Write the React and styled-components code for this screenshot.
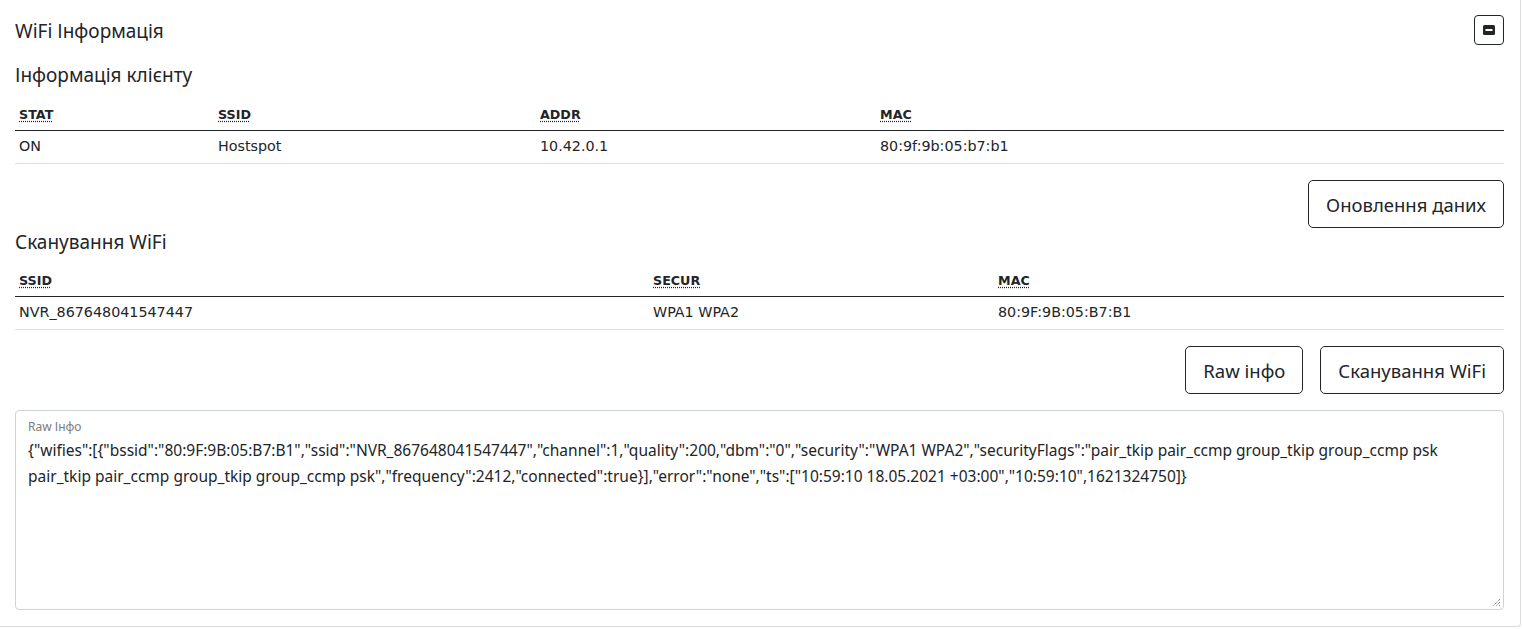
import React from "react";
import styled, { createGlobalStyle } from "styled-components";

const Global = createGlobalStyle`
  html, body { margin: 0; padding: 0; background: #fff; }
  body { font-family: "Noto Sans", "Open Sans", sans-serif; color: #212529; }
  * { box-sizing: border-box; }
`;

const Card = styled.div`
  width: 1521px;
  height: 627px;
  border-right: 1px solid #dcdcdc;
  border-bottom: 1px solid #dcdcdc;
  border-bottom-right-radius: 4px;
  padding: 15px 16px 0 15px;
  display: flex;
  flex-direction: column;
`;

const HeaderRow = styled.div`
  display: flex;
  align-items: center;
  justify-content: space-between;
  height: 30px;
`;

const Title = styled.h2`
  margin: 2px 0 0;
  font-size: 19px;
  font-weight: 400;
  line-height: 26px;
`;

const CollapseBtn = styled.button`
  width: 30px;
  height: 30px;
  border: 1px solid #212529;
  border-radius: 4px;
  background: #fff;
  padding: 0;
  display: flex;
  align-items: center;
  justify-content: center;
`;

const SubTitle = styled.h3`
  margin: ${(p) => p.$mt || 0}px 0 0;
  font-size: 19px;
  font-weight: 400;
  line-height: 26px;
`;

const Table = styled.table`
  width: 100%;
  border-collapse: collapse;
  margin-top: ${(p) => p.$mt || 0}px;
  font-family: "DejaVu Sans", sans-serif;
`;

const Th = styled.th`
  text-align: left;
  padding: 8px 4px 7px;
  line-height: 16px;
  border-bottom: 1px solid #212529;
  font-size: 12.7px;
  font-weight: 700;
  width: ${(p) => p.$w || "auto"};
`;

const Abbr = styled.abbr`
  text-decoration: underline dotted;
  text-underline-offset: 2px;
  cursor: help;
`;

const Td = styled.td`
  padding: 7px 4px 8px;
  line-height: 17px;
  border-bottom: 1px solid #dee2e6;
  font-size: 14.3px;
`;

const Actions = styled.div`
  display: flex;
  justify-content: flex-end;
  gap: 17px;
  margin-top: ${(p) => p.$mt || 0}px;
`;

const Button = styled.button`
  height: 48px;
  padding: 0 17px;
  border: 1px solid #212529;
  border-radius: 5px;
  background: #fff;
  color: #212529;
  font-family: "Noto Sans", "Open Sans", sans-serif;
  font-size: 18.5px;
`;

const RawBox = styled.div`
  margin-top: 16px;
  height: 200px;
  border: 1px solid #ced4da;
  border-radius: 4px;
  padding: 8px 12px;
  position: relative;
`;

const RawLabel = styled.div`
  font-size: 12px;
  color: #7b7b7b;
  line-height: 16px;
`;

const RawText = styled.div`
  margin-top: 2px;
  font-size: 15.5px;
  line-height: 26px;
  word-break: break-word;
`;

const Grip = styled.svg`
  position: absolute;
  right: 2px;
  bottom: 2px;
`;

export default function App() {
  const raw =
    '{"wifies":[{"bssid":"80:9F:9B:05:B7:B1","ssid":"NVR_867648041547447","channel":1,"quality":200,"dbm":"0","security":"WPA1 WPA2","securityFlags":"pair_tkip pair_ccmp group_tkip group_ccmp psk pair_tkip pair_ccmp group_tkip group_ccmp psk","frequency":2412,"connected":true}],"error":"none","ts":["10:59:10 18.05.2021 +03:00","10:59:10",1621324750]}';
  return (
    <>
      <Global />
      <Card>
        <HeaderRow>
          <Title>WiFi Інформація</Title>
          <CollapseBtn aria-label="collapse">
            <svg width="12" height="10" viewBox="0 0 12 10">
              <rect x="0" y="0" width="12" height="10" rx="1.5" fill="#212529" />
              <rect x="2.5" y="4" width="7" height="2" fill="#fff" />
            </svg>
          </CollapseBtn>
        </HeaderRow>
        <SubTitle $mt={17}>Інформація клієнту</SubTitle>
        <Table $mt={11}>
          <thead>
            <tr>
              <Th $w="199px"><Abbr title="Status">STAT</Abbr></Th>
              <Th $w="322px"><Abbr title="SSID">SSID</Abbr></Th>
              <Th $w="340px"><Abbr title="Address">ADDR</Abbr></Th>
              <Th><Abbr title="MAC">MAC</Abbr></Th>
            </tr>
          </thead>
          <tbody>
            <tr>
              <Td>ON</Td>
              <Td>Hostspot</Td>
              <Td>10.42.0.1</Td>
              <Td>80:9f:9b:05:b7:b1</Td>
            </tr>
          </tbody>
        </Table>
        <Actions $mt={16}>
          <Button>Оновлення даних</Button>
        </Actions>
        <SubTitle $mt={1}>Сканування WiFi</SubTitle>
        <Table $mt={10}>
          <thead>
            <tr>
              <Th $w="634px"><Abbr title="SSID">SSID</Abbr></Th>
              <Th $w="345px"><Abbr title="Security">SECUR</Abbr></Th>
              <Th><Abbr title="MAC">MAC</Abbr></Th>
            </tr>
          </thead>
          <tbody>
            <tr>
              <Td>NVR_867648041547447</Td>
              <Td>WPA1 WPA2</Td>
              <Td>80:9F:9B:05:B7:B1</Td>
            </tr>
          </tbody>
        </Table>
        <Actions $mt={16}>
          <Button>Raw інфо</Button>
          <Button>Сканування WiFi</Button>
        </Actions>
        <RawBox>
          <RawLabel>Raw Інфо</RawLabel>
          <RawText>{raw}</RawText>
          <Grip width="10" height="10" viewBox="0 0 10 10">
            <path d="M9 2 L2 9 M9 5 L5 9 M9 8 L8 9" stroke="#555" strokeWidth="1" strokeDasharray="1 1" />
          </Grip>
        </RawBox>
      </Card>
    </>
  );
}
